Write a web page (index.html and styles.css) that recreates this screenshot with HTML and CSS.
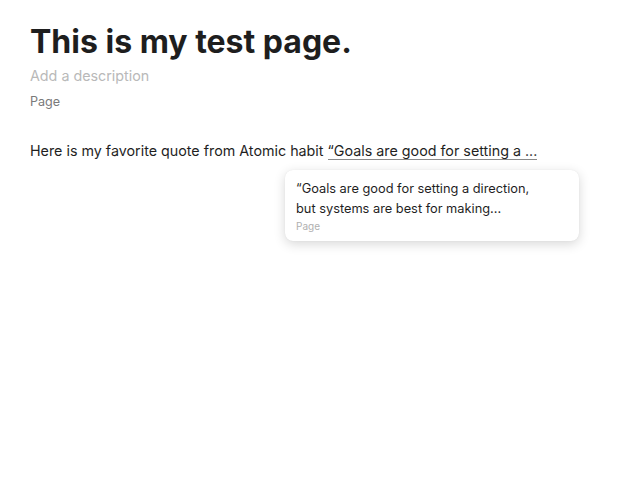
FILE: index.html
```html
<!DOCTYPE html>
<html>
<head>
<meta charset="utf-8">
<link rel="stylesheet" href="styles.css">
</head>
<body>
<main class="page">
  <h1 class="title">This is my test page.</h1>
  <div class="desc">Add a description</div>
  <div class="type">Page</div>
  <div class="content">
    <p class="body">Here is my favorite quote from Atomic habit <span class="ref">“Goals are good for setting a ...</span></p>
    <div class="hover-card">
      <div class="card-text">“Goals are good for setting a direction,<br>but systems are best for making...</div>
      <div class="card-type">Page</div>
    </div>
  </div>
</main>
</body>
</html>
```
FILE: styles.css
```css
html, body {
  margin: 0;
  padding: 0;
  background: #fff;
}
body {
  min-height: 500px;
  font-family: Inter, "Noto Sans", sans-serif;
  color: #1f1f1f;
}
.page {
  padding: 22px 30px 40px;
}
.title {
  margin: 0;
  font-size: 32px;
  line-height: 40px;
  font-weight: 700;
  color: #1e1e1e;
}
.desc {
  margin-top: 3px;
  font-size: 14.3px;
  line-height: 22px;
  color: #b9b9b9;
}
.type {
  margin-top: 6px;
  font-size: 12.6px;
  line-height: 18px;
  color: #7a7a7a;
}
.content {
  margin-top: 29px;
  display: flex;
  flex-direction: column;
  align-items: flex-start;
}
.body {
  margin: 0;
  font-size: 14.3px;
  line-height: 22px;
  color: #1f1f1f;
}
.ref {
  border-bottom: 1px solid #8a8a8a;
}
.hover-card {
  margin: 8px 0 0 255px;
  width: 272px;
  padding: 9px 11px 7px;
  background: #fff;
  border-radius: 8px;
  box-shadow: 0 3px 12px rgba(0, 0, 0, 0.16), 0 0 1px rgba(0, 0, 0, 0.1);
}
.card-text {
  font-size: 12.8px;
  line-height: 20px;
  color: #1f1f1f;
}
.card-type {
  font-size: 10px;
  line-height: 15px;
  color: #b0b0b0;
}
```
